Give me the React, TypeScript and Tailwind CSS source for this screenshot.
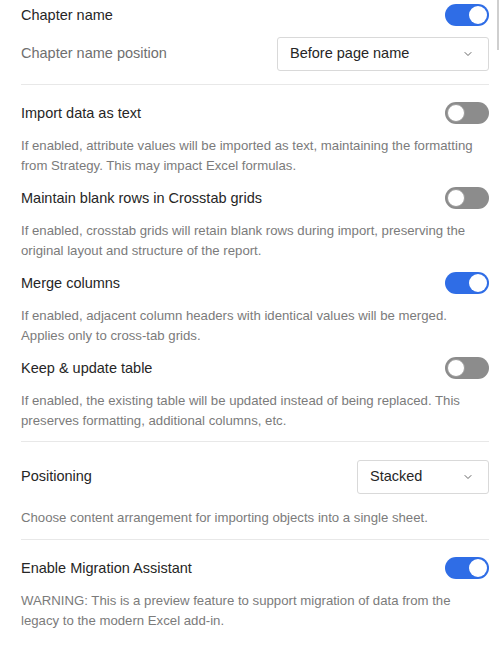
import React from 'react';
import {ChevronDown} from "lucide-react";

const Toggle = ({on}: {on: boolean}) => (
    <div className={`w-[44px] h-[22px] rounded-full flex items-center px-[2px] shrink-0 ${on ? "bg-[#2f6de6] justify-end" : "bg-[#8c8c8c] justify-start"}`}>
        <div className={`w-[18px] h-[18px] rounded-full bg-white ${on ? "" : "border border-[#9a9a9a]"}`}/>
    </div>
);

const Select = ({value, width}: {value: string, width: string}) => (
    <div className={`${width} h-[34px] border border-[#d9d9d9] rounded-[3px] flex items-center justify-between pl-[12px] pr-[14px] text-[14.5px] text-[#262626]`}>
        <span>{value}</span>
        <ChevronDown size={12} strokeWidth={2} className="text-[#666]"/>
    </div>
);

const Option = ({title, desc, on}: {title: string, desc: string, on: boolean}) => (
    <div className="flex flex-col">
        <div className="flex flex-row items-center justify-between h-[22px]">
            <span className="text-[14.5px] text-[#262626] pt-[1px]">{title}</span>
            <Toggle on={on}/>
        </div>
        <p className="mt-[12px] text-[13.2px] leading-[20px] text-[#7b7b7b]">{desc}</p>
    </div>
);

const Divider = () => <div className="h-px bg-[#e8e8e8]"/>;

const App = () => {
    return (
        <div className="relative w-[500px] h-[648px] bg-white overflow-hidden" style={{fontFamily: '"Liberation Sans", Arial, sans-serif'}}>
            <div className="absolute right-[1px] top-0 w-[2px] h-[50px] bg-[#cfcfcf]"/>
            <div className="ml-[21px] w-[468px] pt-[4px] flex flex-col">
                <div className="flex flex-row items-center justify-between h-[22px]">
                    <span className="text-[14.5px] text-[#262626] pt-[1px]">Chapter name</span>
                    <Toggle on={true}/>
                </div>
                <div className="mt-[11px] flex flex-row items-center justify-between">
                    <span className="text-[14.5px] text-[#6f6f6f]">Chapter name position</span>
                    <Select value="Before page name" width="w-[212px]"/>
                </div>
                <div className="mt-[13px]"><Divider/></div>

                <div className="mt-[17px] flex flex-col gap-[11px]">
                    <Option title="Import data as text" on={false}
                            desc="If enabled, attribute values will be imported as text, maintaining the formatting from Strategy. This may impact Excel formulas."/>
                    <Option title="Maintain blank rows in Crosstab grids" on={false}
                            desc="If enabled, crosstab grids will retain blank rows during import, preserving the original layout and structure of the report."/>
                    <Option title="Merge columns" on={true}
                            desc="If enabled, adjacent column headers with identical values will be merged. Applies only to cross-tab grids."/>
                    <Option title="Keep & update table" on={false}
                            desc="If enabled, the existing table will be updated instead of being replaced. This preserves formatting, additional columns, etc."/>
                </div>
                <div className="mt-[10px]"><Divider/></div>

                <div className="mt-[18px] flex flex-row items-center justify-between">
                    <span className="text-[14.5px] text-[#262626]">Positioning</span>
                    <Select value="Stacked" width="w-[132px]"/>
                </div>
                <p className="mt-[14px] text-[13.2px] leading-[20px] text-[#7b7b7b]">Choose content arrangement for importing objects into a single sheet.</p>
                <div className="mt-[11px]"><Divider/></div>

                <div className="mt-[17px]">
                    <Option title="Enable Migration Assistant" on={true}
                            desc="WARNING: This is a preview feature to support migration of data from the legacy to the modern Excel add-in."/>
                </div>
            </div>
        </div>
    );
};

export default App;
